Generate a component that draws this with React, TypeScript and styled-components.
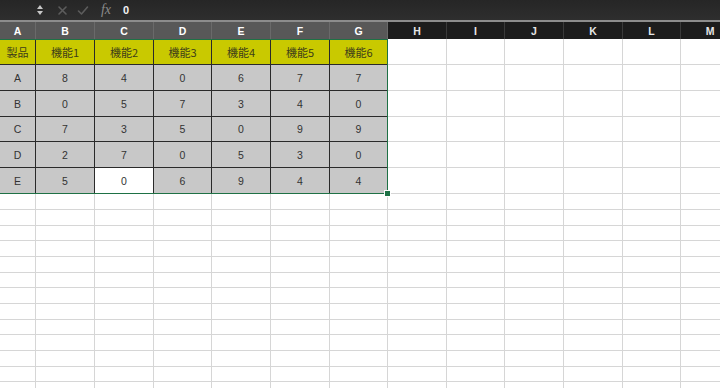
import React from 'react';
import styled, { createGlobalStyle } from 'styled-components';

const GlobalStyle = createGlobalStyle`
  html, body {
    margin: 0;
    padding: 0;
    background: #ffffff;
    overflow: hidden;
  }
  body {
    font-family: "Noto Sans CJK JP", "Liberation Sans", sans-serif;
  }
`;

const COLS = ['A', 'B', 'C', 'D', 'E', 'F', 'G', 'H', 'I', 'J', 'K', 'L', 'M'];
const WIDTHS = [36, 59, 59, 58, 59, 59, 58, 59, 58, 59, 59, 58, 59];
const TEMPLATE = WIDTHS.map(w => w + 'px').join(' ');
const SELECTED = 7;

const HEAD = ['製品', '機能1', '機能2', '機能3', '機能4', '機能5', '機能6'];
const DATA: (string | number)[][] = [
    ['A', 8, 4, 0, 6, 7, 7],
    ['B', 0, 5, 7, 3, 4, 0],
    ['C', 7, 3, 5, 0, 9, 9],
    ['D', 2, 7, 0, 5, 3, 0],
    ['E', 5, 0, 6, 9, 4, 4],
];
const DATA_HEIGHTS = [26, 26, 26, 25, 26, 26];
const EMPTY_ROWS = 13;

const Page = styled.div`
  width: 720px;
  height: 388px;
  overflow: hidden;
  position: relative;
  background: #fff;
`;

const FormulaBar = styled.div`
  height: 20px;
  display: flex;
  align-items: center;
  background: linear-gradient(180deg, #262626 0%, #2e2e2e 100%);
  border-bottom: 2px solid #8c8c8c;
`;

const NameBox = styled.div`
  width: 35px;
  height: 100%;
`;

const Stepper = styled.div`
  width: 10px;
  display: flex;
  flex-direction: column;
  align-items: center;
  gap: 2px;
  margin-right: 6px;
`;

const Triangle = styled.div<{ up?: boolean }>`
  width: 0;
  height: 0;
  border-left: 3.5px solid transparent;
  border-right: 3.5px solid transparent;
  ${p => p.up ? 'border-bottom: 4px solid #c8c8c8;' : 'border-top: 4px solid #c8c8c8;'}
`;

const BarIcon = styled.div<{ w: number }>`
  width: ${p => p.w}px;
  display: flex;
  align-items: center;
  justify-content: center;
`;

const Fx = styled.span`
  font-family: "Liberation Serif", "DejaVu Serif", serif;
  font-style: italic;
  font-size: 14px;
  color: #8a8a8a;
  width: 22px;
  text-align: center;
  margin-left: 2px;
`;

const FormulaInput = styled.div`
  flex: 1;
  height: 100%;
  display: flex;
  align-items: center;
  padding-left: 6px;
  font-family: "Liberation Sans", sans-serif;
  font-weight: bold;
  font-size: 11px;
  color: #f2f2f2;
`;

const Grid = styled.div`
  display: grid;
  grid-template-columns: ${TEMPLATE};
  position: relative;
`;

const ColHead = styled.div<{ selected: boolean }>`
  height: 17px;
  display: flex;
  align-items: center;
  justify-content: center;
  font-family: "Liberation Sans", sans-serif;
  font-weight: bold;
  font-size: 10.5px;
  color: ${p => p.selected ? '#ffffff' : '#e6e6e6'};
  background: ${p => p.selected ? '#585858' : '#1c1c1c'};
  border-right: 1px solid ${p => p.selected ? '#6a6a6a' : '#3a3a3a'};
  box-sizing: border-box;
`;

const Cell = styled.div<{ kind: 'head' | 'data' | 'blank' | 'white'; h: number }>`
  height: ${p => p.h}px;
  box-sizing: border-box;
  display: flex;
  align-items: center;
  justify-content: center;
  font-size: ${p => p.kind === 'head' ? 11 : 10.5}px;
  font-family: ${p => p.kind === 'head'
    ? '"Noto Sans CJK JP", "Liberation Sans", sans-serif'
    : '"Liberation Sans", "Noto Sans CJK JP", sans-serif'};
  color: ${p => p.kind === 'head' ? '#3d3d1a' : '#333'};
  background: ${p => p.kind === 'head' ? '#c9c900' : p.kind === 'data' ? '#c8c8c8' : '#fff'};
  border-right: 1px solid ${p => p.kind === 'blank' ? '#d6d6d6' : '#2a2a2a'};
  border-bottom: 1px solid ${p => p.kind === 'blank' ? '#d6d6d6' : '#2a2a2a'};
`;

const Selection = styled.div`
  position: absolute;
  left: -2px;
  top: 0;
  width: 390px;
  height: 155px;
  box-sizing: border-box;
  border: 1.5px solid #1e7145;
  pointer-events: none;
`;

const Handle = styled.div`
  position: absolute;
  right: -4px;
  bottom: -4px;
  width: 5px;
  height: 5px;
  background: #1e7145;
  border: 1px solid #fff;
`;

const Cross = () => (
    <svg width="11" height="11" viewBox="0 0 11 11">
        <path d="M2 2 L9 9 M9 2 L2 9" stroke="#5c5c5c" strokeWidth="1.6" strokeLinecap="round" />
    </svg>
);

const Check = () => (
    <svg width="12" height="11" viewBox="0 0 12 11">
        <path d="M1.5 6 L4.5 9 L10.5 2" stroke="#5c5c5c" strokeWidth="1.6" fill="none" strokeLinecap="round" strokeLinejoin="round" />
    </svg>
);

const Sheet = () => {
    const cellKind = (r: number, c: number): 'head' | 'data' | 'blank' | 'white' => {
        if (c >= SELECTED) return 'blank';
        if (r === 0) return 'head';
        if (r === 5 && c === 2) return 'white';
        return 'data';
    };

    const rows: React.ReactNode[] = [];
    const table = [HEAD, ...DATA];
    table.forEach((row, r) => {
        COLS.forEach((col, c) => {
            const kind = cellKind(r, c);
            rows.push(
                <Cell key={`${r}-${col}`} kind={kind} h={DATA_HEIGHTS[r]}>
                    {c < SELECTED ? row[c] : ''}
                </Cell>
            );
        });
    });
    for (let r = 0; r < EMPTY_ROWS; r++) {
        COLS.forEach(col => {
            rows.push(<Cell key={`e${r}-${col}`} kind="blank" h={r % 3 === 2 ? 15 : 16}></Cell>);
        });
    }

    return (
        <>
            <Grid>
                {COLS.map((col, i) => (
                    <ColHead key={col} selected={i < SELECTED}>{col}</ColHead>
                ))}
            </Grid>
            <Grid>
                {rows}
                <Selection>
                    <Handle></Handle>
                </Selection>
            </Grid>
        </>
    );
};

const App = () => {
    return (
        <Page>
            <GlobalStyle />
            <FormulaBar>
                <NameBox></NameBox>
                <Stepper>
                    <Triangle up></Triangle>
                    <Triangle></Triangle>
                </Stepper>
                <BarIcon w={22}><Cross /></BarIcon>
                <BarIcon w={20}><Check /></BarIcon>
                <Fx>fx</Fx>
                <FormulaInput>0</FormulaInput>
            </FormulaBar>
            <Sheet />
        </Page>
    );
};

export default App;
